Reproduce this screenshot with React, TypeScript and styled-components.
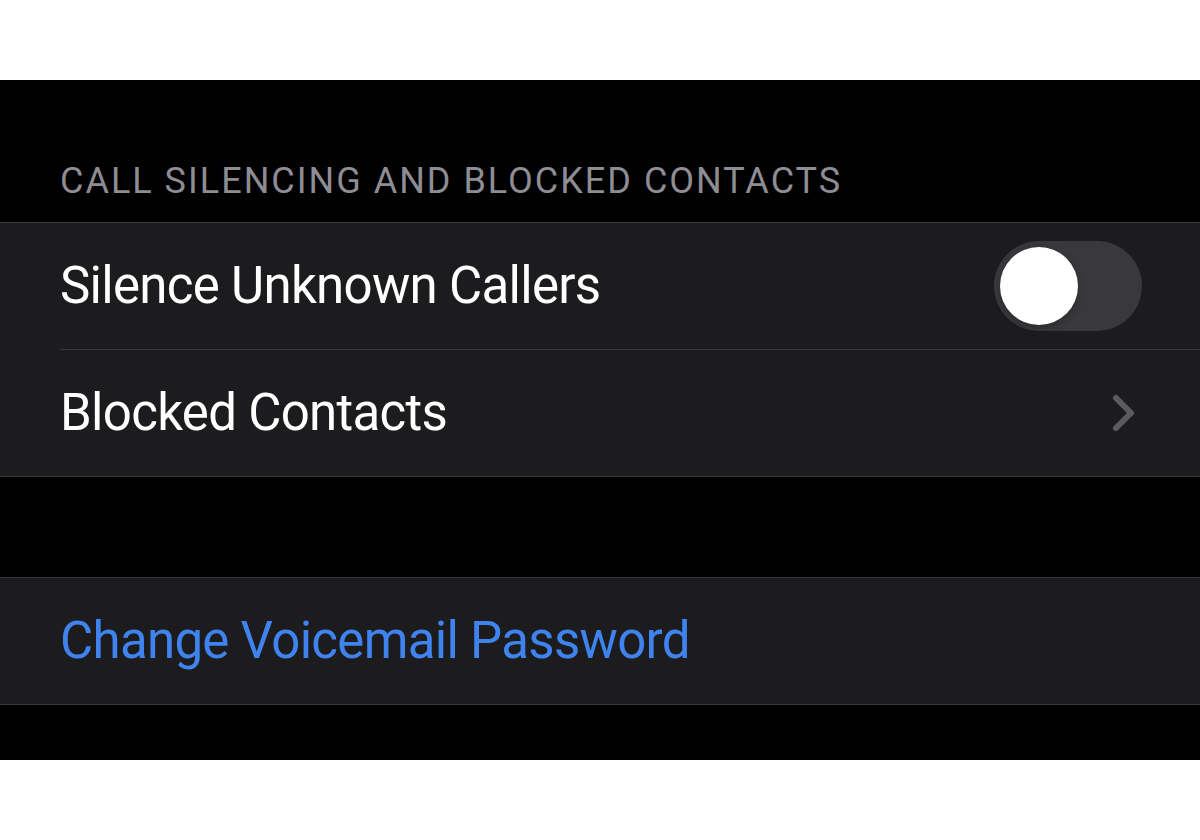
import React from "react";
import styled, { createGlobalStyle } from "styled-components";

const GlobalStyle = createGlobalStyle`
  html, body {
    margin: 0;
    padding: 0;
    background: #ffffff;
  }
  body {
    font-family: Roboto, "Liberation Sans", Arial, sans-serif;
  }
`;

export default function App() {
  return (
    <>
      <GlobalStyle />
      <Page>
        <Screen>
          <SectionHeader>CALL SILENCING AND BLOCKED CONTACTS</SectionHeader>
          <Group>
            <Row>
              <Label>Silence Unknown Callers</Label>
              <Toggle>
                <Knob />
              </Toggle>
            </Row>
            <Divider />
            <Row>
              <Label>Blocked Contacts</Label>
              <Chevron width="24" height="38" viewBox="0 0 24 38">
                <path
                  d="M4 4 L19 19 L4 34"
                  fill="none"
                  stroke="#5b5b5f"
                  strokeWidth="6"
                  strokeLinecap="round"
                  strokeLinejoin="round"
                />
              </Chevron>
            </Row>
          </Group>
          <Group $gap>
            <Row>
              <Label $tint="#3f83ee">Change Voicemail Password</Label>
            </Row>
          </Group>
        </Screen>
      </Page>
    </>
  );
}

const Page = styled.div`
  width: 1200px;
  height: 840px;
  padding-top: 80px;
  box-sizing: border-box;
  background: #ffffff;
`;

const Screen = styled.div`
  height: 680px;
  background: #000000;
  display: flex;
  flex-direction: column;
`;

const SectionHeader = styled.div`
  height: 142px;
  box-sizing: border-box;
  display: flex;
  align-items: flex-end;
  padding: 0 0 21px 60px;
  font-size: 36px;
  line-height: 40px;
  letter-spacing: 2px;
  color: #8d8d93;
`;

const Group = styled.div<{ $gap?: boolean }>`
  background: #1c1c1e;
  border-top: 1px solid #38383a;
  border-bottom: 1px solid #38383a;
  margin-top: ${(p) => (p.$gap ? "100px" : "0")};
`;

const Row = styled.div`
  height: 126px;
  display: flex;
  align-items: center;
  justify-content: space-between;
  padding: 0 58px 0 60px;
`;

const Divider = styled.div`
  height: 1px;
  margin-left: 60px;
  background: #38383a;
`;

const Label = styled.span<{ $tint?: string }>`
  font-size: 51px;
  line-height: 60px;
  letter-spacing: -0.7px;
  color: ${(p) => p.$tint || "#ffffff"};
`;

const Toggle = styled.div`
  width: 148px;
  height: 90px;
  border-radius: 45px;
  background: #39393d;
  display: flex;
  align-items: center;
  padding-left: 6px;
  box-sizing: border-box;
`;

const Knob = styled.div`
  width: 78px;
  height: 78px;
  border-radius: 50%;
  background: #ffffff;
  box-shadow: 0 3px 8px rgba(0, 0, 0, 0.25);
`;

const Chevron = styled.svg`
  margin-right: 6px;
`;
